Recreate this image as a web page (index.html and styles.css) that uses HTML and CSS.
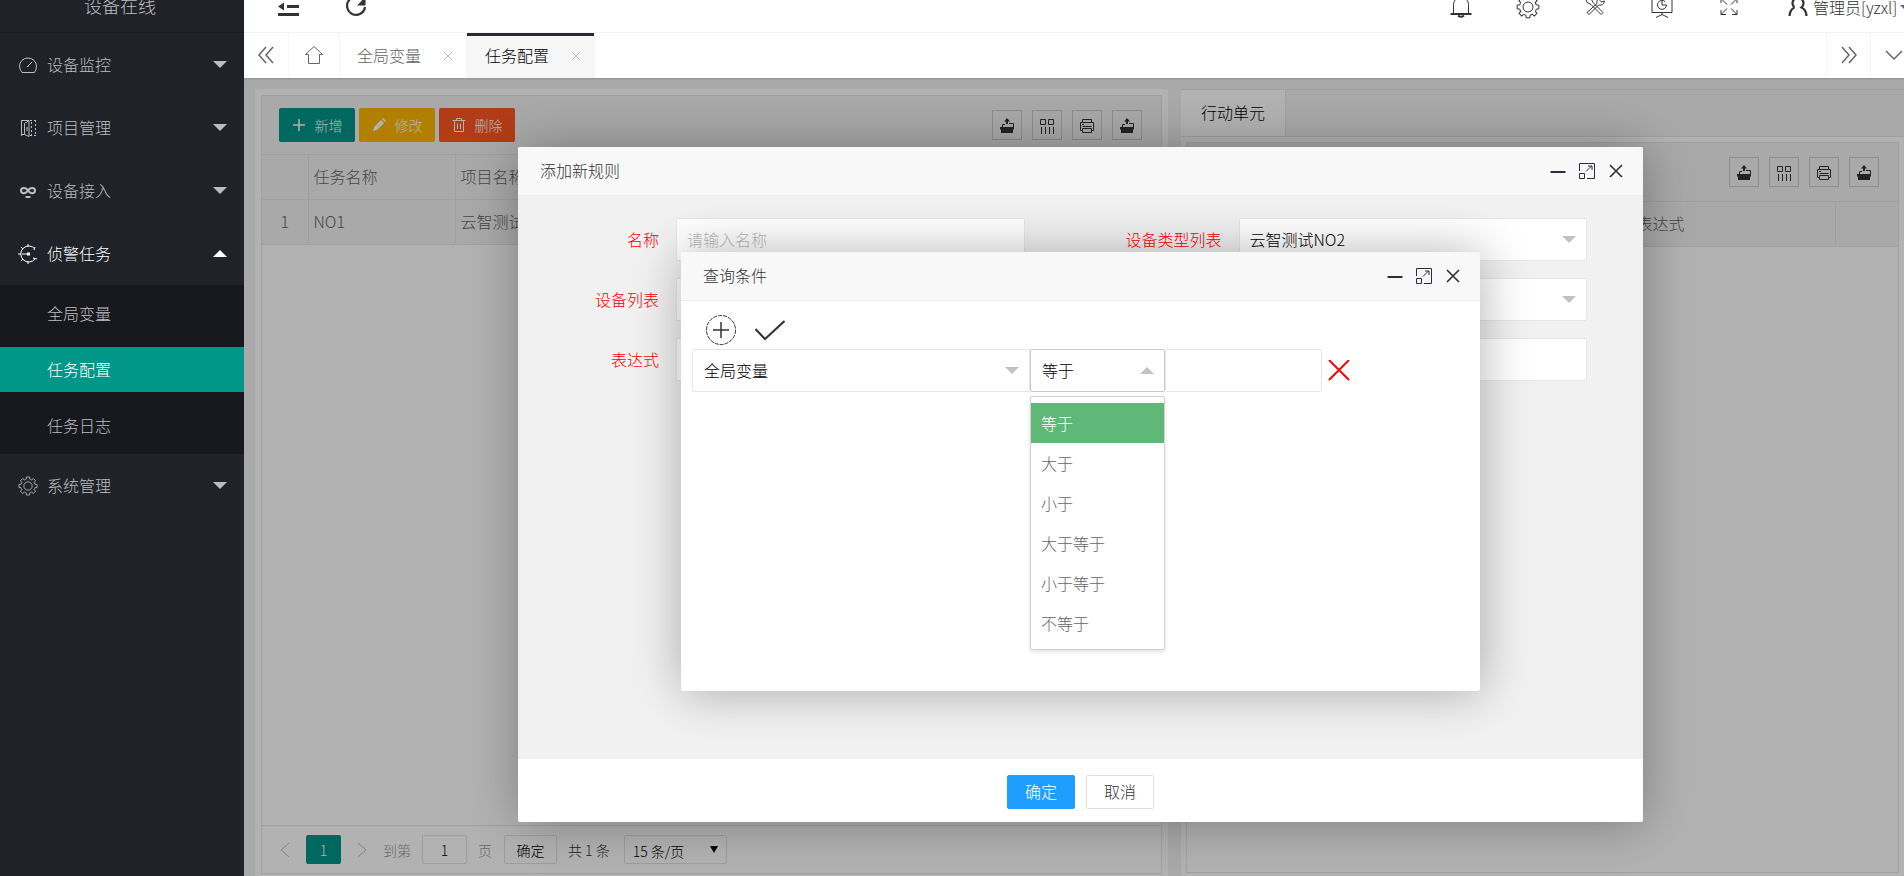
FILE: index.html
```html
<!DOCTYPE html>
<html lang="zh-CN">
<head>
    <meta charset="UTF-8">
    <meta name="viewport" content="width=device-width, initial-scale=1.0">
    <title>任务配置</title>
    <link rel="stylesheet" href="styles.css">
</head>
<body>
    <svg class="icon-defs" aria-hidden="true">
        <symbol id="i-gauge" viewBox="0 0 20 20"><path d="M4 17.500h12.500q2-3 2-6.500a8.500 8 0 0 0-17 0q0 3.500 2.500 6.500zM9 12l5-5M9 11.500h1.500"/></symbol>
        <symbol id="i-door" viewBox="0 0 20 20"><path d="M3.500 2v16M3.500 2.500H11M3.500 16.500H6M6.500 5.500l4.500-3v16l-4.500-2zM9 9v4"/><path d="M13.500 4v14M17.500 2v16M12 2.500h6M12 17.500h6" stroke-dasharray="2 2"/></symbol>
        <symbol id="i-link" viewBox="0 0 20 20"><path stroke-width="2" d="M10 9.500C8 6 3 6 3 9.500s5 3.500 7 0 7-3.500 7 0-5 3.500-7 0M7.500 16h5"/></symbol>
        <symbol id="i-watch" viewBox="0 0 20 20"><path d="M17 5a8 8 0 1 0 0 10M4 10h7"/><path stroke-width="3" d="M9 10h3"/><path d="M10 0v3M10 17v3M0 10h3M3 3l2 2M3 17l2-2M17 3l-1 3M15 14l4 1"/></symbol>
        <symbol id="i-gear" viewBox="0 0 24 24">
            <path id="tooth" d="M20.250 9.940L22.830 10.090V13.910L20.250 14.060A8.500 8.500 0 0 1 19.290 16.380"/>
            <use href="#tooth" transform="rotate(45 12 12)"/><use href="#tooth" transform="rotate(90 12 12)"/><use href="#tooth" transform="rotate(135 12 12)"/><use href="#tooth" transform="rotate(180 12 12)"/><use href="#tooth" transform="rotate(225 12 12)"/><use href="#tooth" transform="rotate(270 12 12)"/><use href="#tooth" transform="rotate(315 12 12)"/>
            <circle cx="12" cy="12" r="5"/>
        </symbol>
        <symbol id="i-fold" viewBox="0 0 24 24"><path stroke-width="3" d="M2 3.500h21M11 11.500h12M2 19.500h21"/><path fill="currentColor" stroke="none" d="M2 11.500l6-4v8z"/></symbol>
        <symbol id="i-refresh" viewBox="0 0 24 24"><path stroke-width="2.200" d="M20 6.500A9 9 0 1 0 21 12"/><path fill="currentColor" stroke="none" d="M21.500 2v8.500H13z"/></symbol>
        <symbol id="i-bell" viewBox="0 0 24 24"><path d="M4.500 19V9.500a7.500 7.500 0 0 1 15 0V19"/><path stroke-width="2" d="M1.500 19h21M9 20.500q3 2.500 6 0"/></symbol>
        <symbol id="i-tools" viewBox="0 0 24 24"><path d="M5 2.500l3 1 2 4 10 10-2 2-10-10-4-2-1-3zM4 17.500L14 8.500q-1-5 4-6l-1 3 1.500 1.500 3-1q-1 5-6 4L6 19.500z"/></symbol>
        <symbol id="i-board" viewBox="0 0 24 24"><path d="M2 2.500h20v15H2zM12 18v2M6 22.500l6-3 6 3"/><path d="M15 6.500a4.500 4.500 0 1 0 1.500 3.500H12V6"/></symbol>
        <symbol id="i-full" viewBox="0 0 24 24"><path d="M4 8V3.500h5M4 3.500l6 6M15 3.500h5V8M20 3.500l-6 6M4 15v4.500h5M4 19.500l6-6M15 19.500h5V15M20 19.500l-6-6"/></symbol>
        <symbol id="i-user" viewBox="0 0 24 24"><path stroke-width="2.200" d="M8.500 12.500a5.500 5.500 0 1 1 7 0q4.500 2 5 8.500M8.500 12.500q-4.500 2-5 8.500"/></symbol>
        <symbol id="i-left" viewBox="0 0 18 18"><path stroke-width="1.500" d="M9 1L2 9l7 8M16 1L9 9l7 8"/></symbol>
        <symbol id="i-right" viewBox="0 0 18 18"><path stroke-width="1.500" d="M2 1l7 8-7 8M9 1l7 8-7 8"/></symbol>
        <symbol id="i-down" viewBox="0 0 18 18"><path stroke-width="1.500" d="M1 5l8 8 8-8"/></symbol>
        <symbol id="i-home" viewBox="0 0 18 18"><path d="M0.500 8.500L9 0.500l8.500 8H14.500v9h-11v-9z"/></symbol>
        <symbol id="i-x" viewBox="0 0 10 10"><path d="M1 1l8 8M9 1L1 9"/></symbol>
        <symbol id="i-plus" viewBox="0 0 14 14"><path stroke-width="1.500" d="M7 1v12M1 7h12"/></symbol>
        <symbol id="i-edit" viewBox="0 0 14 14"><path fill="currentColor" stroke="none" d="M1 13l1-4 7-7 3 3-7 7zM10 1l1-1 3 3-1 1z"/></symbol>
        <symbol id="i-trash" viewBox="0 0 14 14"><path d="M0.500 2.500h13M4.500 2V0.500h5V2M2.500 3v10.500h9V3M5.500 5.500v5.500M8.500 5.500v5.500"/></symbol>
        <symbol id="i-export" viewBox="0 0 16 16"><path fill="currentColor" stroke="none" d="M1 9h14v2l-1 1v3H2v-3l-1-1zM5 3.500L8 0l3 3.500H9V6H7V3.500z"/><path d="M10 5.500h4.500V10M3.500 9V6.500H6"/></symbol>
        <symbol id="i-cols" viewBox="0 0 16 16"><path d="M1.500 1.500h5v5h-5zM9.500 1.500h5v5h-5zM2.500 9v7M6.500 9v7M10.500 9v7M14.500 9v7"/></symbol>
        <symbol id="i-print" viewBox="0 0 16 16"><path d="M3.500 4.500v-3h9v3M3.500 12.500h-2v-8h13v8h-2M3.500 10.500h9v4h-9zM3.500 8.500h9M3 6.500h2"/></symbol>
        <symbol id="i-min" viewBox="0 0 16 16"><path stroke-width="2" d="M0.500 9h15"/></symbol>
        <symbol id="i-max" viewBox="0 0 16 16"><path d="M0.500 8V0.500h15v15H8M0.500 10.500h5v5h-5zM7 8.500l5.500-5.500M9 3h4v4"/></symbol>
        <symbol id="i-close" viewBox="0 0 16 16"><path stroke-width="1.600" d="M2 2l12 12M14 2L2 14"/></symbol>
        <symbol id="i-add" viewBox="0 0 30 30"><circle cx="15" cy="15" r="14.500" stroke-dasharray="4 1"/><path stroke-width="1.500" d="M15 7v16M7 15h16"/></symbol>
        <symbol id="i-check" viewBox="0 0 30 30"><path stroke-width="2" d="M0.500 14L10 24 29.500 6"/></symbol>
        <symbol id="i-del" viewBox="0 0 22 22"><path stroke-width="2" d="M1 0l20 20M21 0L1 20"/></symbol>
        <symbol id="i-prev" viewBox="0 0 14 14"><path d="M11 0L3 7l8 7"/></symbol>
        <symbol id="i-next" viewBox="0 0 14 14"><path d="M3 0l8 7-8 7"/></symbol>
    </svg>

    <div class="app">
        <aside class="side">
            <div class="logo">设备在线</div>
            <nav>
                <a class="nav-item" href="#"><svg><use href="#i-gauge"/></svg><span>设备监控</span><i class="arrow"></i></a>
                <a class="nav-item" href="#"><svg><use href="#i-door"/></svg><span>项目管理</span><i class="arrow"></i></a>
                <a class="nav-item" href="#"><svg><use href="#i-link"/></svg><span>设备接入</span><i class="arrow"></i></a>
                <a class="nav-item open" href="#"><svg><use href="#i-watch"/></svg><span>侦警任务</span><i class="arrow up"></i></a>
                <div class="nav-child">
                    <a href="#">全局变量</a>
                    <a class="active" href="#">任务配置</a>
                    <a href="#">任务日志</a>
                </div>
                <a class="nav-item" href="#"><svg><use href="#i-gear"/></svg><span>系统管理</span><i class="arrow"></i></a>
            </nav>
        </aside>

        <div class="body">
            <header class="header">
                <button class="fold" aria-label="折叠"><svg><use href="#i-fold"/></svg></button>
                <button class="refresh" aria-label="刷新"><svg><use href="#i-refresh"/></svg></button>
                <div class="header-right">
                    <button aria-label="消息"><svg><use href="#i-bell"/></svg></button>
                    <button aria-label="设置"><svg><use href="#i-gear"/></svg></button>
                    <button aria-label="工具"><svg><use href="#i-tools"/></svg></button>
                    <button aria-label="大屏"><svg><use href="#i-board"/></svg></button>
                    <button aria-label="全屏"><svg><use href="#i-full"/></svg></button>
                    <a class="user" href="#"><svg><use href="#i-user"/></svg>管理员[yzxl]<i class="arrow"></i></a>
                </div>
            </header>

            <div class="tabs">
                <button class="tab-ctrl" aria-label="左移"><svg><use href="#i-left"/></svg></button>
                <a class="tab-home" href="#" aria-label="首页"><svg><use href="#i-home"/></svg></a>
                <a class="tab" href="#">全局变量<svg><use href="#i-x"/></svg></a>
                <a class="tab active" href="#">任务配置<svg><use href="#i-x"/></svg></a>
                <button class="tab-ctrl tab-next" aria-label="右移"><svg><use href="#i-right"/></svg></button>
                <button class="tab-ctrl tab-more" aria-label="更多"><svg><use href="#i-down"/></svg></button>
            </div>

            <main class="main">
                <div class="cards">
                    <section class="card card-left">
                        <div class="table-box">
                            <div class="toolbar">
                                <button class="btn btn-add"><svg><use href="#i-plus"/></svg>新增</button>
                                <button class="btn btn-edit"><svg><use href="#i-edit"/></svg>修改</button>
                                <button class="btn btn-del"><svg><use href="#i-trash"/></svg>删除</button>
                                <div class="tools">
                                    <button aria-label="导出"><svg><use href="#i-export"/></svg></button>
                                    <button aria-label="筛选列"><svg><use href="#i-cols"/></svg></button>
                                    <button aria-label="打印"><svg><use href="#i-print"/></svg></button>
                                    <button aria-label="导出全部"><svg><use href="#i-export"/></svg></button>
                                </div>
                            </div>
                            <table class="grid">
                                <thead>
                                    <tr><th class="col-num"></th><th class="col-name">任务名称</th><th>项目名称</th></tr>
                                </thead>
                                <tbody>
                                    <tr><td class="col-num">1</td><td>NO1</td><td>云智测试NO2</td></tr>
                                </tbody>
                            </table>
                            <div class="pager">
                                <button class="page-arrow" aria-label="上一页"><svg><use href="#i-prev"/></svg></button>
                                <button class="page-cur">1</button>
                                <button class="page-arrow" aria-label="下一页"><svg><use href="#i-next"/></svg></button>
                                <label for="pageNo">到第</label>
                                <input type="text" id="pageNo" value="1">
                                <label for="pageNo">页</label>
                                <button class="page-ok">确定</button>
                                <span>共 1 条</span>
                                <div class="page-size">
                                    <select aria-label="每页条数"><option>15 条/页</option><option>30 条/页</option></select>
                                </div>
                            </div>
                        </div>
                    </section>

                    <section class="card card-right">
                        <div class="card-tabs"><a href="#">行动单元</a></div>
                        <div class="table-box">
                            <div class="toolbar">
                                <div class="tools">
                                    <button aria-label="导出"><svg><use href="#i-export"/></svg></button>
                                    <button aria-label="筛选列"><svg><use href="#i-cols"/></svg></button>
                                    <button aria-label="打印"><svg><use href="#i-print"/></svg></button>
                                    <button aria-label="导出全部"><svg><use href="#i-export"/></svg></button>
                                </div>
                            </div>
                            <table class="grid">
                                <thead>
                                    <tr><th></th><th class="col-expr">表达式</th><th class="col-end"></th></tr>
                                </thead>
                            </table>
                        </div>
                    </section>
                </div>

                <div class="shade"></div>

                <div class="layer layer-rule">
                    <div class="layer-title">
                        <h2>添加新规则</h2>
                        <button aria-label="最小化"><svg><use href="#i-min"/></svg></button>
                        <button aria-label="最大化"><svg><use href="#i-max"/></svg></button>
                        <button aria-label="关闭"><svg><use href="#i-close"/></svg></button>
                    </div>
                    <form class="rule-form">
                        <div class="field">
                            <label for="ruleName">名称</label>
                            <input type="text" id="ruleName" placeholder="请输入名称">
                        </div>
                        <div class="field">
                            <label for="deviceType">设备类型列表</label>
                            <div class="select"><select id="deviceType"><option>云智测试NO2</option></select></div>
                        </div>
                        <div class="field">
                            <label for="deviceList">设备列表</label>
                            <div class="select"><select id="deviceList"><option></option></select></div>
                        </div>
                        <div class="field">
                            <label for="varList"></label>
                            <div class="select"><select id="varList" aria-label="变量列表"><option></option></select></div>
                        </div>
                        <div class="field field-wide">
                            <label for="expression">表达式</label>
                            <input type="text" id="expression">
                        </div>
                    </form>
                    <div class="layer-btns">
                        <button class="ok">确定</button>
                        <button>取消</button>
                    </div>
                </div>

                <div class="layer layer-query">
                    <div class="layer-title">
                        <h2>查询条件</h2>
                        <button aria-label="最小化"><svg><use href="#i-min"/></svg></button>
                        <button aria-label="最大化"><svg><use href="#i-max"/></svg></button>
                        <button aria-label="关闭"><svg><use href="#i-close"/></svg></button>
                    </div>
                    <div class="query-body">
                        <div class="query-actions">
                            <button aria-label="添加条件"><svg><use href="#i-add"/></svg></button>
                            <button aria-label="完成"><svg><use href="#i-check"/></svg></button>
                        </div>
                        <div class="query-row">
                            <div class="select">
                                <select aria-label="变量"><option>全局变量</option></select>
                            </div>
                            <div class="select select-op">
                                <select aria-label="条件"><option>等于</option><option>大于</option><option>小于</option></select>
                                <ul class="options" role="listbox" aria-label="条件选项">
                                    <li class="this" role="option" aria-selected="true">等于</li>
                                    <li role="option">大于</li>
                                    <li role="option">小于</li>
                                    <li role="option">大于等于</li>
                                    <li role="option">小于等于</li>
                                    <li role="option">不等于</li>
                                </ul>
                            </div>
                            <input type="text" aria-label="值">
                            <button class="row-del" aria-label="删除条件"><svg><use href="#i-del"/></svg></button>
                        </div>
                    </div>
                </div>
            </main>
        </div>
    </div>
</body>
</html>
```
FILE: styles.css
```css
* {
    box-sizing: border-box;
}
body {
    margin: 0;
    height: 100vh;
    overflow: hidden;
    font-family: "Noto Sans CJK SC", sans-serif;
    font-weight: 300;
    font-size: 16px;
    line-height: 24px;
    color: #333;
    background: #f2f2f2;
}
button, input, select {
    font: inherit;
    color: inherit;
    margin: 0;
}
button {
    padding: 0;
    border: none;
    background: none;
    cursor: pointer;
}
a {
    color: inherit;
    text-decoration: none;
}
svg {
    display: block;
    flex: none;
    fill: none;
    stroke: currentColor;
}
.icon-defs {
    position: absolute;
    width: 0;
    height: 0;
}
.arrow {
    border: 7px solid transparent;
    border-top-color: currentColor;
    border-bottom-width: 0;
}
.arrow.up {
    border-top-width: 0;
    border-bottom: 7px solid currentColor;
}

/* the window is scrolled a little way past the top bar */
.app {
    display: flex;
    height: calc(100vh + 18px);
    margin-top: -18px;
}

/* sidebar */
.side {
    flex: none;
    width: 244px;
    background: #20222a;
    color: #bcbdbf;
}
.logo {
    height: 51px;
    padding-right: 4px;
    line-height: 46px;
    text-align: center;
    font-size: 18px;
    border-bottom: 1px solid #1a1c22;
}
.nav-item {
    display: flex;
    align-items: center;
    height: 63px;
    padding: 0 17px 0 18px;
}
.nav-item svg {
    width: 20px;
    height: 20px;
    margin-right: 9px;
}
.nav-item span {
    flex: 1;
    padding-bottom: 2px;
}
.nav-item.open {
    color: #fff;
}
.nav-child {
    display: flex;
    flex-direction: column;
    gap: 11px;
    padding: 6px 0;
    background: #17181d;
}
.nav-child a {
    height: 45px;
    padding-left: 47px;
    line-height: 44px;
}
.nav-child .active {
    background: #009688;
    color: #fff;
}

/* top bar */
.body {
    flex: 1;
    min-width: 0;
    display: flex;
    flex-direction: column;
}
.header {
    display: flex;
    align-items: center;
    flex: none;
    height: 51px;
    padding-left: 32px;
    background: #fff;
    border-bottom: 1px solid #f6f6f6;
}
.header svg {
    width: 24px;
    height: 24px;
}
.header .refresh {
    margin-left: 44px;
}
.header-right {
    display: flex;
    align-items: center;
    margin-left: auto;
}
.header-right button {
    display: flex;
    justify-content: center;
    width: 67px;
}
.user {
    display: flex;
    align-items: center;
    width: 142px;
    padding-left: 24px;
    white-space: nowrap;
}
.user svg {
    margin-right: 3px;
}
.user .arrow {
    flex: none;
    margin-left: 3px;
    border-width: 5px 5px 0;
    color: #666;
}

/* page tabs */
.tabs {
    position: relative;
    z-index: 2;
    display: flex;
    flex: none;
    height: 45px;
    background: #fff;
    color: #666;
    box-shadow: 0 1px 2px rgba(0, 0, 0, 0.15);
}
.tabs svg {
    width: 18px;
    height: 18px;
}
.tab-ctrl, .tab-home {
    display: flex;
    align-items: center;
    justify-content: center;
    width: 45px;
    padding-bottom: 1px;
    border-right: 1px solid #f6f6f6;
}
.tab-home {
    width: 51px;
}
.tab {
    display: flex;
    align-items: center;
    padding: 0 13px 2px 17px;
    border-right: 1px solid #f6f6f6;
}
.tabs .tab svg {
    width: 10px;
    height: 10px;
    margin: 2px 0 0 22px;
    color: #bbb;
}
.tab.active {
    background: #f6f6f6;
    color: #000;
    padding-left: 18px;
    box-shadow: inset 0 3px #292b34;
}
.tab-next {
    margin-left: auto;
    border-left: 1px solid #f6f6f6;
}
.tab-more {
    width: 33px;
    padding-left: 12px;
    border: none;
}

/* page content */
.main {
    position: relative;
    flex: 1;
    min-height: 0;
    display: flex;
}
.cards {
    flex: 1;
    min-width: 0;
    display: grid;
    grid-template-columns: 913fr 723fr;
    gap: 13px;
    padding: 11px 0 0 11px;
}
.card {
    display: flex;
    flex-direction: column;
    min-width: 0;
    background: #fff;
}
.card-left {
    padding: 6px 6px 2px;
}
.card-tabs {
    flex: none;
    display: flex;
    height: 48px;
    margin-bottom: 5px;
    background: #f2f2f2;
    border-top: 1px solid #e6e6e6;
    border-bottom: 1px solid #e6e6e6;
    color: #000;
}
.card-tabs a {
    padding: 0 20px;
    line-height: 44px;
    background: #fff;
    border-right: 1px solid #e6e6e6;
}
.card-right .table-box {
    margin: 0 5px 3px;
}
.table-box {
    flex: 1;
    display: flex;
    flex-direction: column;
    border: 1px solid #e6e6e6;
}
.toolbar {
    display: flex;
    align-items: center;
    flex: none;
    gap: 4px;
    height: 58px;
    padding: 0 19px 0 17px;
    background: #f2f2f2;
}
.btn {
    display: flex;
    align-items: center;
    justify-content: center;
    gap: 9px;
    width: 76px;
    height: 34px;
    font-size: 14px;
    color: #fff;
    border-radius: 2px;
}
.btn svg {
    width: 14px;
    height: 14px;
}
.btn-add {
    background: #009688;
}
.btn-edit {
    background: #ffb800;
}
.btn-del {
    background: #ff5722;
}
.tools {
    display: flex;
    gap: 10px;
    margin-left: auto;
}
.tools button {
    display: flex;
    align-items: center;
    justify-content: center;
    width: 30px;
    height: 30px;
    padding-top: 2px;
    border: 1px solid #ccc;
}
.tools svg {
    width: 16px;
    height: 16px;
}
.grid {
    width: 100%;
    table-layout: fixed;
    border-collapse: collapse;
    background: #f2f2f2;
    color: #666;
}
.grid th, .grid td {
    height: 45px;
    padding: 0 5px 3px;
    text-align: left;
    font-weight: 300;
    border: 1px solid #e6e6e6;
    border-left: none;
}
.grid th:last-child, .grid td:last-child {
    border-right: none;
}
.grid .col-num {
    width: 46px;
    text-align: center;
}
.grid .col-name {
    width: 147px;
}
.grid .col-expr {
    width: 204px;
}
.grid .col-end {
    width: 63px;
}
.pager {
    display: flex;
    align-items: center;
    margin-top: auto;
    height: 48px;
    padding: 0 16px 0 2px;
    font-size: 14px;
    color: #333;
    border-top: 1px solid #e6e6e6;
}
.pager label {
    color: #999;
}
.page-arrow {
    display: flex;
    align-items: center;
    justify-content: center;
    width: 42px;
    height: 29px;
    color: #bbb;
}
.page-arrow svg {
    width: 14px;
    height: 14px;
}
.page-cur {
    width: 35px;
    height: 29px;
    color: #fff;
    background: #009688;
    border-radius: 2px;
}
.pager input, .page-ok, .page-size select {
    height: 29px;
    color: #000;
    background: #fff;
    border: 1px solid #e2e2e2;
    border-radius: 2px;
}
.pager input {
    width: 45px;
    margin: 0 11px;
    text-align: center;
}
.page-ok {
    width: 53px;
    margin: 0 11px 0 12px;
}
.page-size {
    position: relative;
    margin-left: 14px;
}
.page-size select {
    appearance: none;
    width: 103px;
    padding: 2px 8px 0;
}
.page-size::after {
    content: "";
    position: absolute;
    top: 11px;
    right: 9px;
    border: 4px solid transparent;
    border-top: 7px solid #000;
    border-bottom: none;
}
.shade {
    position: absolute;
    inset: 0;
    background: rgba(0, 0, 0, 0.3);
}

/* dialogs */
.layer {
    position: absolute;
    display: flex;
    flex-direction: column;
    border-radius: 2px;
    background: #fff;
    box-shadow: 1px 1px 50px rgba(0, 0, 0, 0.3);
}
.layer-rule {
    top: 69px;
    right: 261px;
    bottom: 54px;
    left: 274px;
}
.layer-query {
    top: 174px;
    right: 424px;
    bottom: 185px;
    left: 437px;
}
.layer-title {
    display: flex;
    align-items: center;
    flex: none;
    gap: 13px;
    height: 49px;
    padding: 0 19px 0 22px;
    background: #f8f8f8;
    border-bottom: 1px solid #eee;
    border-radius: 2px 2px 0 0;
    color: #2e2d3c;
}
.layer-title h2 {
    flex: 1;
    margin: 0;
    padding-bottom: 3px;
    font-size: 16px;
    font-weight: 300;
    color: #333;
}
.layer-title svg {
    width: 16px;
    height: 16px;
}
.rule-form {
    flex: 1;
    display: grid;
    grid-template-columns: 1fr 1fr;
    align-content: start;
    row-gap: 17px;
    padding-top: 22px;
    background: #f1f1f1;
}
.field {
    display: flex;
    align-items: center;
    padding-right: 56px;
}
.field-wide {
    grid-column: 1 / 3;
}
.field label {
    flex: none;
    width: 141px;
    margin-right: 17px;
    padding-bottom: 2px;
    text-align: right;
    color: #f00;
}
.layer input, .layer select {
    width: 100%;
    height: 43px;
    padding: 0 10px 2px;
    color: #000;
    background: #fff;
    border: 1px solid #e6e6e6;
    border-radius: 2px;
    outline: none;
}
.layer input::placeholder {
    color: #bbb;
    opacity: 1;
}
.select {
    position: relative;
    flex: 1;
}
.select select {
    display: block;
    appearance: none;
}
.select::after {
    content: "";
    position: absolute;
    top: 18px;
    right: 11px;
    border: 7px solid transparent;
    border-top-color: #c2c2c2;
    border-bottom: none;
}
.layer-btns {
    display: flex;
    align-items: center;
    justify-content: center;
    flex: none;
    gap: 11px;
    height: 63px;
    padding-top: 3px;
}
.layer-btns button {
    width: 68px;
    height: 34px;
    padding-bottom: 2px;
    background: #fff;
    border: 1px solid #dedede;
    border-radius: 2px;
}
.layer-btns .ok {
    color: #fff;
    background: #1e9fff;
    border-color: #1e9fff;
}

/* query dialog */
.query-body {
    padding: 14px 11px;
}
.query-actions {
    display: flex;
    gap: 19px;
    padding: 0 0 4px 14px;
}
.query-actions svg {
    width: 30px;
    height: 30px;
}
.query-row {
    display: grid;
    grid-template-columns: 338fr 135fr 157fr 147px;
    align-items: center;
}
.query-row select {
    padding-left: 11px;
}
.select-op select {
    border-color: #c9c9c9;
}
.select-op::after {
    border-top: none;
    border-bottom: 7px solid #c2c2c2;
}
.row-del {
    justify-self: start;
    margin-left: 6px;
    color: #f00;
}
.row-del svg {
    width: 22px;
    height: 22px;
}
.options {
    position: absolute;
    top: 47px;
    left: 0;
    z-index: 3;
    width: 100%;
    margin: 0;
    padding: 6px 0;
    list-style: none;
    color: #666;
    background: #fff;
    border: 1px solid #d2d2d2;
    border-radius: 2px;
    box-shadow: 0 2px 4px rgba(0, 0, 0, 0.12);
}
.options li {
    padding: 0 10px;
    line-height: 40px;
}
.options .this {
    color: #fff;
    background: #5fb878;
}
```
